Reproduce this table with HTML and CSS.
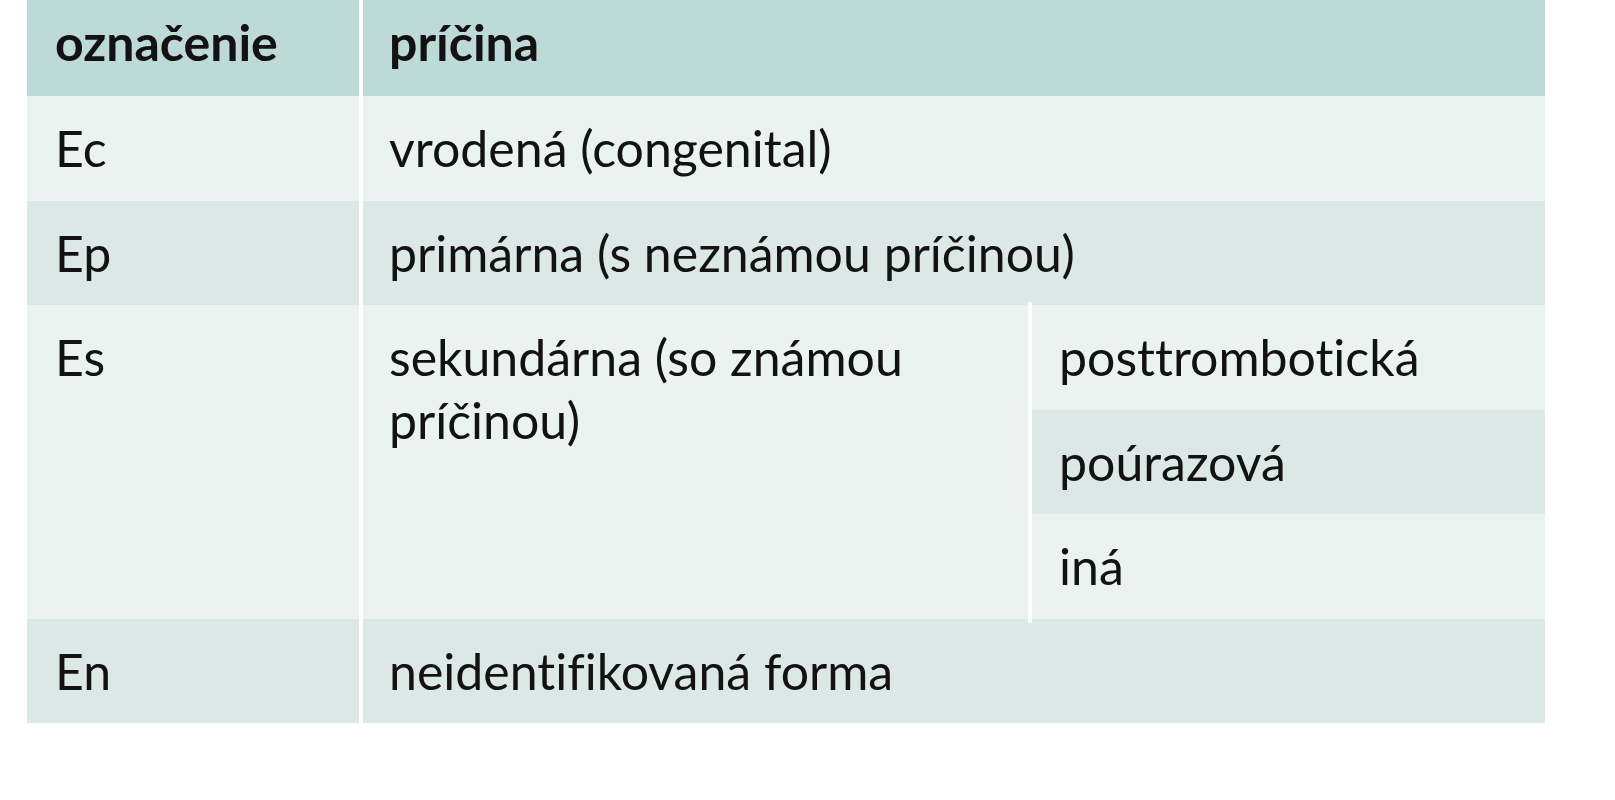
FILE: index.html
```html
<!DOCTYPE html>
<html lang="sk">
<head>
<meta charset="utf-8">
<title>Etiológia</title>
<link rel="stylesheet" href="styles.css">
</head>
<body>
<div class="table">
  <div class="cell head c1">označenie</div>
  <div class="cell head c23">príčina</div>

  <div class="cell light c1">Ec</div>
  <div class="cell light c23">vrodená (congenital)</div>

  <div class="cell dark c1">Ep</div>
  <div class="cell dark c23">primárna (s neznámou príčinou)</div>

  <div class="cell light c1 span3">Es</div>
  <div class="cell light c2 span3">sekundárna (so známou príčinou)</div>
  <div class="cell light c3">posttrombotická</div>
  <div class="cell dark c3">poúrazová</div>
  <div class="cell light c3">iná</div>

  <div class="cell dark c1">En</div>
  <div class="cell dark c23">neidentifikovaná forma</div>
</div>
</body>
</html>
```

FILE: styles.css
```css
html, body {
  margin: 0;
  padding: 0;
  background: #ffffff;
}

body {
  font-family: "Lato", "Open Sans", sans-serif;
  color: #121212;
  font-variant-ligatures: none;
}

.table {
  margin-left: 27px;
  width: 1518px;
  display: grid;
  grid-template-columns: 336px 669px 513px;
  grid-template-rows: 96px repeat(6, 104.5px);
}

.cell {
  font-size: 50px;
  line-height: 63px;
  padding-top: 21px;
  box-sizing: border-box;
}

.head {
  background: #bddad8;
  font-weight: 700;
  padding-top: 11px;
}

.light { background: #ebf3f1; }
.dark  { background: #dbe8e5; }

.c1 {
  grid-column: 1;
  padding-left: 28px;
  border-right: 4px solid #ffffff;
}

.c23 {
  grid-column: 2 / 4;
  padding-left: 26px;
}

.c2 {
  grid-column: 2;
  position: relative;
  padding-left: 26px;
  padding-right: 20px;
}

.c2::after {
  content: "";
  position: absolute;
  top: -3px;
  bottom: -4px;
  right: 0;
  width: 4px;
  background: #ffffff;
}

.c3 {
  grid-column: 3;
  padding-left: 27px;
}

.span3 {
  grid-row: span 3;
}
```
